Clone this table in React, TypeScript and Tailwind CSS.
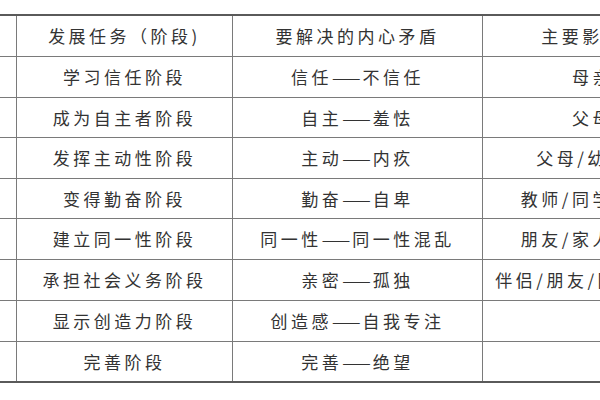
import React from "react";

const rows: { h: string; a: string; b: [string, string]; c: string }[] = [
  { h: "h-[41px]", a: "学习信任阶段", b: ["信任", "不信任"], c: "母亲" },
  { h: "h-[40px]", a: "成为自主者阶段", b: ["自主", "羞怯"], c: "父母" },
  { h: "h-[41px]", a: "发挥主动性阶段", b: ["主动", "内疚"], c: "父母/幼儿园" },
  { h: "h-[40px]", a: "变得勤奋阶段", b: ["勤奋", "自卑"], c: "教师/同学/邻居" },
  { h: "h-[41px]", a: "建立同一性阶段", b: ["同一性", "同一性混乱"], c: "朋友/家人/同伴" },
  { h: "h-[41px]", a: "承担社会义务阶段", b: ["亲密", "孤独"], c: "伴侣/朋友/同事/爱人" },
  { h: "h-[41px]", a: "显示创造力阶段", b: ["创造感", "自我专注"], c: "" },
  { h: "h-[39px]", a: "完善阶段", b: ["完善", "绝望"], c: "" },
];

const cell =
  "flex items-center justify-center whitespace-nowrap overflow-hidden border-r border-[#7a7a7a]";

function Pair({ b }: { b: [string, string] }) {
  return (
    <span className="inline-flex items-center">
      <span>{b[0]}</span>
      <span className="tracking-[-2px] mr-[4px]">——</span>
      <span>{b[1]}</span>
    </span>
  );
}

export default function App() {
  return (
    <div className="w-[600px] h-[400px] bg-white overflow-hidden pt-[14px]">
      <div
        className="w-[720px] border-t-2 border-b-2 border-[#5a5a5a] text-[17px] tracking-[3.5px] text-[#333333]"
        style={{ fontFamily: '"Noto Sans CJK SC", "Noto Sans", sans-serif' }}
      >
        <div className="grid grid-cols-[17px_216px_250px_220px] h-[41px] border-b border-[#7a7a7a]">
          <div className={cell}></div>
          <div className={cell}>发展任务（阶段)</div>
          <div className={cell}>要解决的内心矛盾</div>
          <div className={cell}>主要影响者</div>
        </div>
        {rows.map((r, i) => (
          <div
            key={i}
            className={`grid grid-cols-[17px_216px_250px_220px] ${r.h} ${
              i < rows.length - 1 ? "border-b border-[#7a7a7a]" : ""
            }`}
          >
            <div className={cell}></div>
            <div className={cell}>{r.a}</div>
            <div className={cell}>
              <Pair b={r.b} />
            </div>
            <div className={cell}>{r.c}</div>
          </div>
        ))}
      </div>
    </div>
  );
}
